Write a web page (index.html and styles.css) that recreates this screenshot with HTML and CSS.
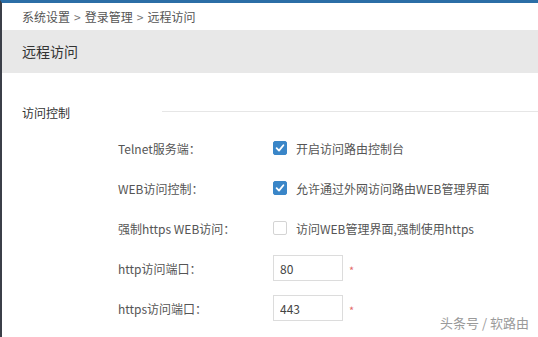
FILE: index.html
```html
<!DOCTYPE html>
<html lang="zh-CN">
<head>
    <meta charset="UTF-8">
    <title>远程访问</title>
    <link rel="stylesheet" href="styles.css">
</head>
<body>

<div class="page">
    <!-- ===== BREADCRUMB ===== -->
    <div class="crumbs">系统设置<span class="sep">&gt;</span>登录管理<span class="sep">&gt;</span>远程访问</div>

    <!-- ===== PANEL HEADER ===== -->
    <div class="panel_head">远程访问</div>

    <!-- ===== ACCESS CONTROL ===== -->
    <div class="section_title">
        <span>访问控制</span>
        <div class="section_line"></div>
    </div>

    <div class="form_rows">
        <div class="form_row">
            <span class="row_label">Telnet服务端：</span>
            <label class="check_item">
                <span class="check_box checked">
                    <svg width="10" height="10" viewBox="0 0 10 10"><path d="M1.6 5.2 L4 7.6 L8.4 2.2" fill="none" stroke="#fff" stroke-width="1.8" stroke-linecap="round" stroke-linejoin="round"/></svg>
                </span>
                开启访问路由控制台
            </label>
        </div>
        <div class="form_row">
            <span class="row_label">WEB访问控制：</span>
            <label class="check_item">
                <span class="check_box checked">
                    <svg width="10" height="10" viewBox="0 0 10 10"><path d="M1.6 5.2 L4 7.6 L8.4 2.2" fill="none" stroke="#fff" stroke-width="1.8" stroke-linecap="round" stroke-linejoin="round"/></svg>
                </span>
                允许通过外网访问路由WEB管理界面
            </label>
        </div>
        <div class="form_row">
            <span class="row_label">强制https WEB访问：</span>
            <label class="check_item">
                <span class="check_box"></span>
                访问WEB管理界面,强制使用https
            </label>
        </div>
        <div class="form_row">
            <span class="row_label">http访问端口：</span>
            <input class="port_input" type="text" value="80">
            <span class="required">*</span>
        </div>
        <div class="form_row">
            <span class="row_label">https访问端口：</span>
            <input class="port_input" type="text" value="443">
            <span class="required">*</span>
        </div>
    </div>

    <div class="watermark">头条号 / 软路由</div>
</div>

</body>
</html>
```

FILE: styles.css
```css
html, body {
    margin: 0;
    padding: 0;
}

body {
    font-family: "Noto Sans CJK SC", "Liberation Sans", sans-serif;
    font-size: 12px;
    color: #444;
    background-color: #fff;
}

.page {
    position: relative;
    height: 337px;
    border-top: 3px solid #2b6ea6;
    border-left: 2px solid #3b3f48;
    box-sizing: border-box;
    overflow: hidden;
}

/* ===== Breadcrumb ===== */
.crumbs {
    height: 27px;
    line-height: 27px;
    padding-left: 20px;
    color: #555;
}

.crumbs .sep {
    margin: 0 4px;
    color: #777;
}

/* ===== Panel header ===== */
.panel_head {
    height: 43px;
    line-height: 43px;
    padding-left: 20px;
    background-color: #e8e8e8;
    font-size: 14px;
    color: #333;
}

/* ===== Section ===== */
.section_title {
    display: flex;
    align-items: center;
    margin-top: 28px;
    padding-left: 20px;
    height: 22px;
    color: #333;
}

.section_line {
    flex: 1;
    height: 1px;
    margin-left: 92px;
    margin-top: -2px;
    background-color: #e6e6e6;
}

.form_rows {
    margin-top: 5px;
    display: flex;
    flex-direction: column;
}

.form_row {
    display: flex;
    align-items: center;
    height: 40px;
}

.row_label {
    width: 155px;
    padding-left: 116px;
    color: #555;
}

.check_item {
    display: flex;
    align-items: center;
    color: #555;
}

.check_box {
    width: 14px;
    height: 14px;
    box-sizing: border-box;
    border: 1px solid #d4d4d4;
    border-radius: 2px;
    margin-right: 9px;
    display: flex;
    align-items: center;
    justify-content: center;
    background-color: #fff;
}

.check_box.checked {
    border-color: #3a86c8;
    background-color: #3a86c8;
}

.port_input {
    width: 70px;
    height: 26px;
    box-sizing: border-box;
    border: 1px solid #dcdcdc;
    padding: 0 6px;
    font-family: inherit;
    font-size: 12px;
    color: #444;
    outline: none;
}

.required {
    margin-left: 6px;
    margin-top: 3px;
    color: #e46a6a;
    font-size: 11px;
}

.watermark {
    position: absolute;
    right: 9px;
    bottom: 5px;
    font-size: 13px;
    color: #9a9a9a;
    text-shadow: 0 0 2px #fff;
}
```
